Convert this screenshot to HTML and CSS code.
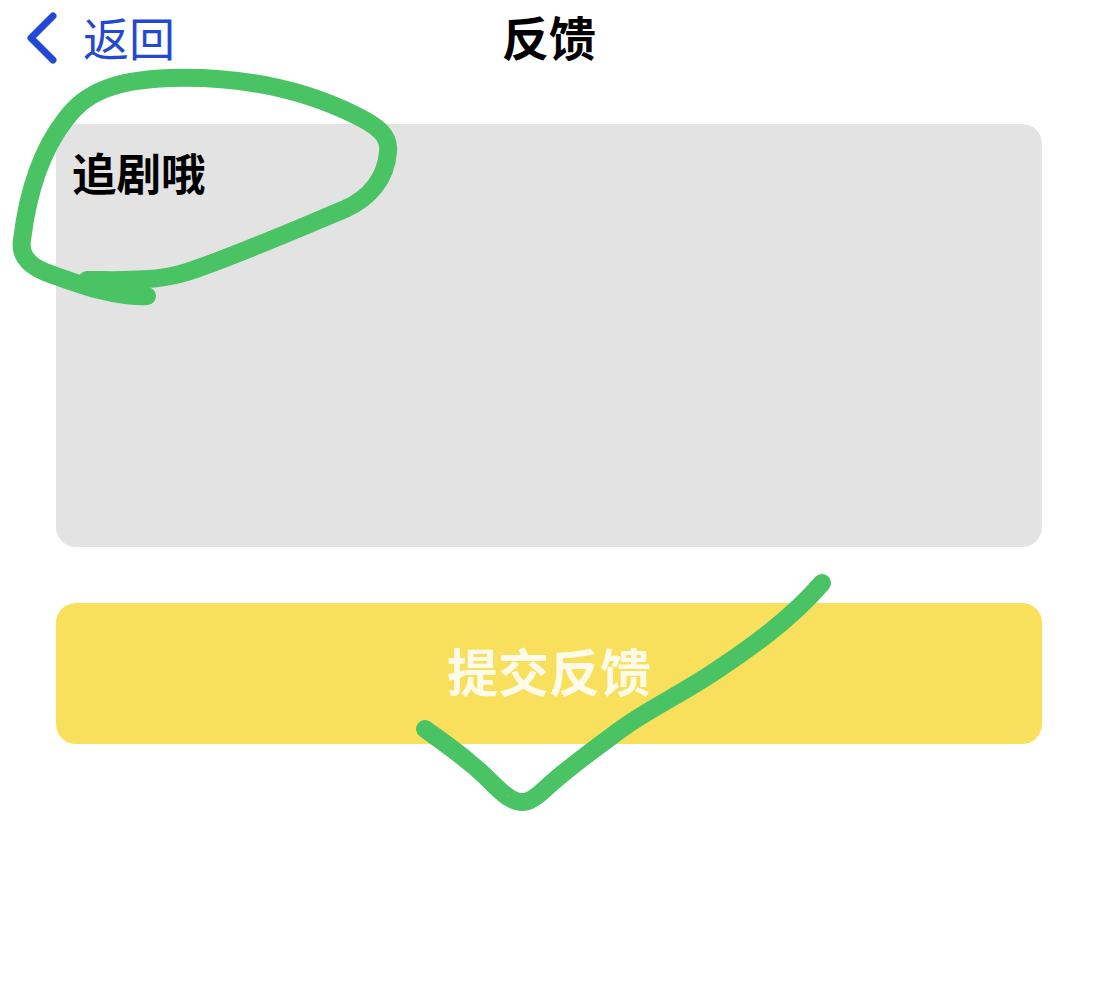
FILE: index.html
```html
<!DOCTYPE html>
<html lang="zh-CN">
<head>
<meta charset="utf-8">
<title>反馈</title>
<link rel="stylesheet" href="styles.css">
</head>
<body>
<div class="page">
  <header class="nav">
    <a class="back">
      <svg class="back-icon" viewBox="0 0 34 52" width="34" height="52"><path d="M29 4 L7 26 L29 48" fill="none" stroke="#2148d6" stroke-width="7" stroke-linecap="round" stroke-linejoin="round"/></svg>
      <span class="back-label">返回</span>
    </a>
    <h1 class="title">反馈</h1>
  </header>
  <main class="content">
    <div class="feedback-box">追剧哦</div>
    <button class="submit">提交反馈</button>
  </main>
  <svg class="marks" viewBox="0 0 1098 981" width="1098" height="981">
    <path class="mark" d="M147 296 C120 298 85 287 45 272 C25 264 20 252 22 240 C28 190 42 150 65 120 C85 92 115 80 170 78 C240 76 300 88 355 115 C378 126 390 136 388 152 C386 178 370 198 345 209 C290 232 235 256 187 272 C155 282 120 280 87 280"/>
    <path class="mark" d="M140 290 L95 284"/>
    <path class="mark" d="M822 583 C790 620 750 648 717 670 C680 695 650 708 620 730 C590 752 565 770 545 789 C530 803 522 806 508 797 C495 788 488 777 470 763 C455 750 440 740 425 729"/>
  </svg>
</div>
</body>
</html>
```
FILE: styles.css
```css
* { box-sizing: border-box; }
html, body { margin: 0; padding: 0; background: #fff; }
body { font-family: "Noto Sans CJK SC", "Noto Sans", sans-serif; }
.page { position: relative; width: 1098px; height: 981px; overflow: hidden; }
.nav { position: relative; height: 76px; display: flex; align-items: flex-start; justify-content: center; }
.back { position: absolute; left: 24px; top: 12px; display: flex; align-items: flex-start; gap: 25px; color: #2349cf; }
.back-icon { display: block; }
.back-label { font-size: 46px; line-height: 48px; font-weight: 400; }
.title { margin: 0; font-size: 47px; line-height: 72px; font-weight: 700; color: #000; }
.content { display: flex; flex-direction: column; gap: 56px; padding: 48px 56px 0; }
.feedback-box { height: 423px; background: #e3e3e3; border-radius: 20px; padding: 18px 16px; font-size: 44.5px; line-height: 60px; font-weight: 700; color: #000; }
.submit { height: 141px; border: 0; border-radius: 20px; background: #f8e05c; color: #fffbea; font: 700 51px/1 "Noto Sans CJK SC", sans-serif; padding: 0 0 6px; }
.marks { position: absolute; inset: 0; pointer-events: none; }
.mark { fill: none; stroke: #4ac365; stroke-width: 18; stroke-linecap: round; stroke-linejoin: round; }
```
